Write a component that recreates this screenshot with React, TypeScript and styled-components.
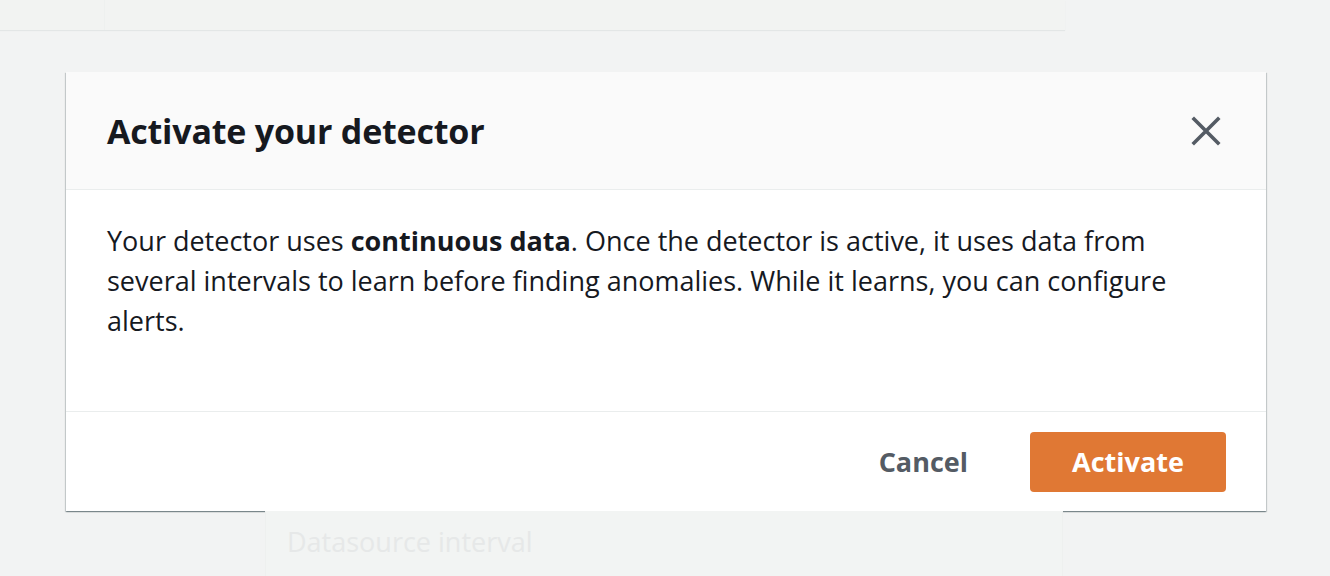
import React from 'react';
import styled, { createGlobalStyle } from 'styled-components';

const GlobalStyle = createGlobalStyle`
  html, body {
    margin: 0;
    padding: 0;
    background: #f2f3f3;
    font-family: 'Open Sans', 'Noto Sans', Arial, sans-serif;
    -webkit-font-smoothing: antialiased;
  }
`;

export default function App() {
  return (
    <>
      <GlobalStyle />
      <Page>
        <TopCard>
          <TopCardSide />
        </TopCard>

        <ModalRow>
          <Modal role="dialog" aria-labelledby="modal-title">
            <Header>
              <Title id="modal-title">Activate your detector</Title>
              <CloseButton aria-label="Close">
                <svg width="30" height="30" viewBox="0 0 30 30">
                  <path
                    d="M3 3 L27 27 M27 3 L3 27"
                    stroke="#545b64"
                    strokeWidth="3.6"
                    strokeLinecap="square"
                  />
                </svg>
              </CloseButton>
            </Header>

            <Body>
              Your detector uses <strong>continuous data</strong>. Once the
              detector is active, it uses data from several intervals to learn
              before finding anomalies. While it learns, you can configure
              alerts.
            </Body>

            <Footer>
              <LinkButton>Cancel</LinkButton>
              <PrimaryButton>Activate</PrimaryButton>
            </Footer>
          </Modal>
        </ModalRow>

        <BottomCard>
          <FaintLabel>Datasource interval</FaintLabel>
        </BottomCard>
      </Page>
    </>
  );
}

const Page = styled.div`
  width: 1330px;
  height: 576px;
  overflow: hidden;
  display: flex;
  flex-direction: column;
`;

const TopCard = styled.div`
  width: 1065px;
  height: 30px;
  flex-shrink: 0;
  background: #f2f3f2;
  box-shadow: 0 1px 1px rgba(0, 28, 36, 0.06);
  display: flex;
`;

const TopCardSide = styled.div`
  width: 104px;
  border-right: 1px solid #eef0ef;
`;

const ModalRow = styled.div`
  padding: 42px 0 0 66px;
  flex-shrink: 0;
`;

const Modal = styled.div`
  width: 1200px;
  background: #ffffff;
  box-shadow: 0 1px 1px 0 rgba(0, 28, 36, 0.3), 1px 1px 1px 0 rgba(0, 28, 36, 0.15),
    -1px 1px 1px 0 rgba(0, 28, 36, 0.15);
  display: flex;
  flex-direction: column;
`;

const Header = styled.div`
  height: 118px;
  box-sizing: border-box;
  padding: 0 40px 0 41px;
  background: #fafafa;
  border-bottom: 1px solid #eaeded;
  display: flex;
  align-items: center;
  justify-content: space-between;
`;

const Title = styled.h2`
  margin: 0;
  font-size: 34px;
  font-weight: 700;
  color: #16191f;
  letter-spacing: -0.2px;
`;

const CloseButton = styled.button`
  border: none;
  background: none;
  padding: 0;
  margin-right: 5px;
  display: flex;
  cursor: pointer;
`;

const Body = styled.div`
  height: 222px;
  box-sizing: border-box;
  padding: 31px 60px 0 41px;
  border-bottom: 1px solid #eaeded;
  font-size: 27px;
  line-height: 40px;
  color: #16191f;

  strong {
    font-weight: 700;
  }
`;

const Footer = styled.div`
  height: 99px;
  box-sizing: border-box;
  padding: 0 40px;
  display: flex;
  align-items: center;
  justify-content: flex-end;
  gap: 42px;
`;

const LinkButton = styled.button`
  border: none;
  background: none;
  padding: 0 20px;
  font-family: inherit;
  font-size: 27px;
  font-weight: 700;
  color: #545b64;
  cursor: pointer;
`;

const PrimaryButton = styled.button`
  width: 196px;
  height: 60px;
  border: none;
  border-radius: 4px;
  background: #e07834;
  color: #ffffff;
  font-family: inherit;
  font-size: 27px;
  font-weight: 700;
  cursor: pointer;
`;

const BottomCard = styled.div`
  margin-left: 265px;
  width: 798px;
  flex: 1;
  background: #f2f4f3;
  border-left: 1px solid #eef0ef;
  border-right: 1px solid #eef0ef;
  padding: 12px 0 0 21px;
  box-sizing: border-box;
`;

const FaintLabel = styled.div`
  font-size: 27px;
  color: #e6e8e8;
`;
